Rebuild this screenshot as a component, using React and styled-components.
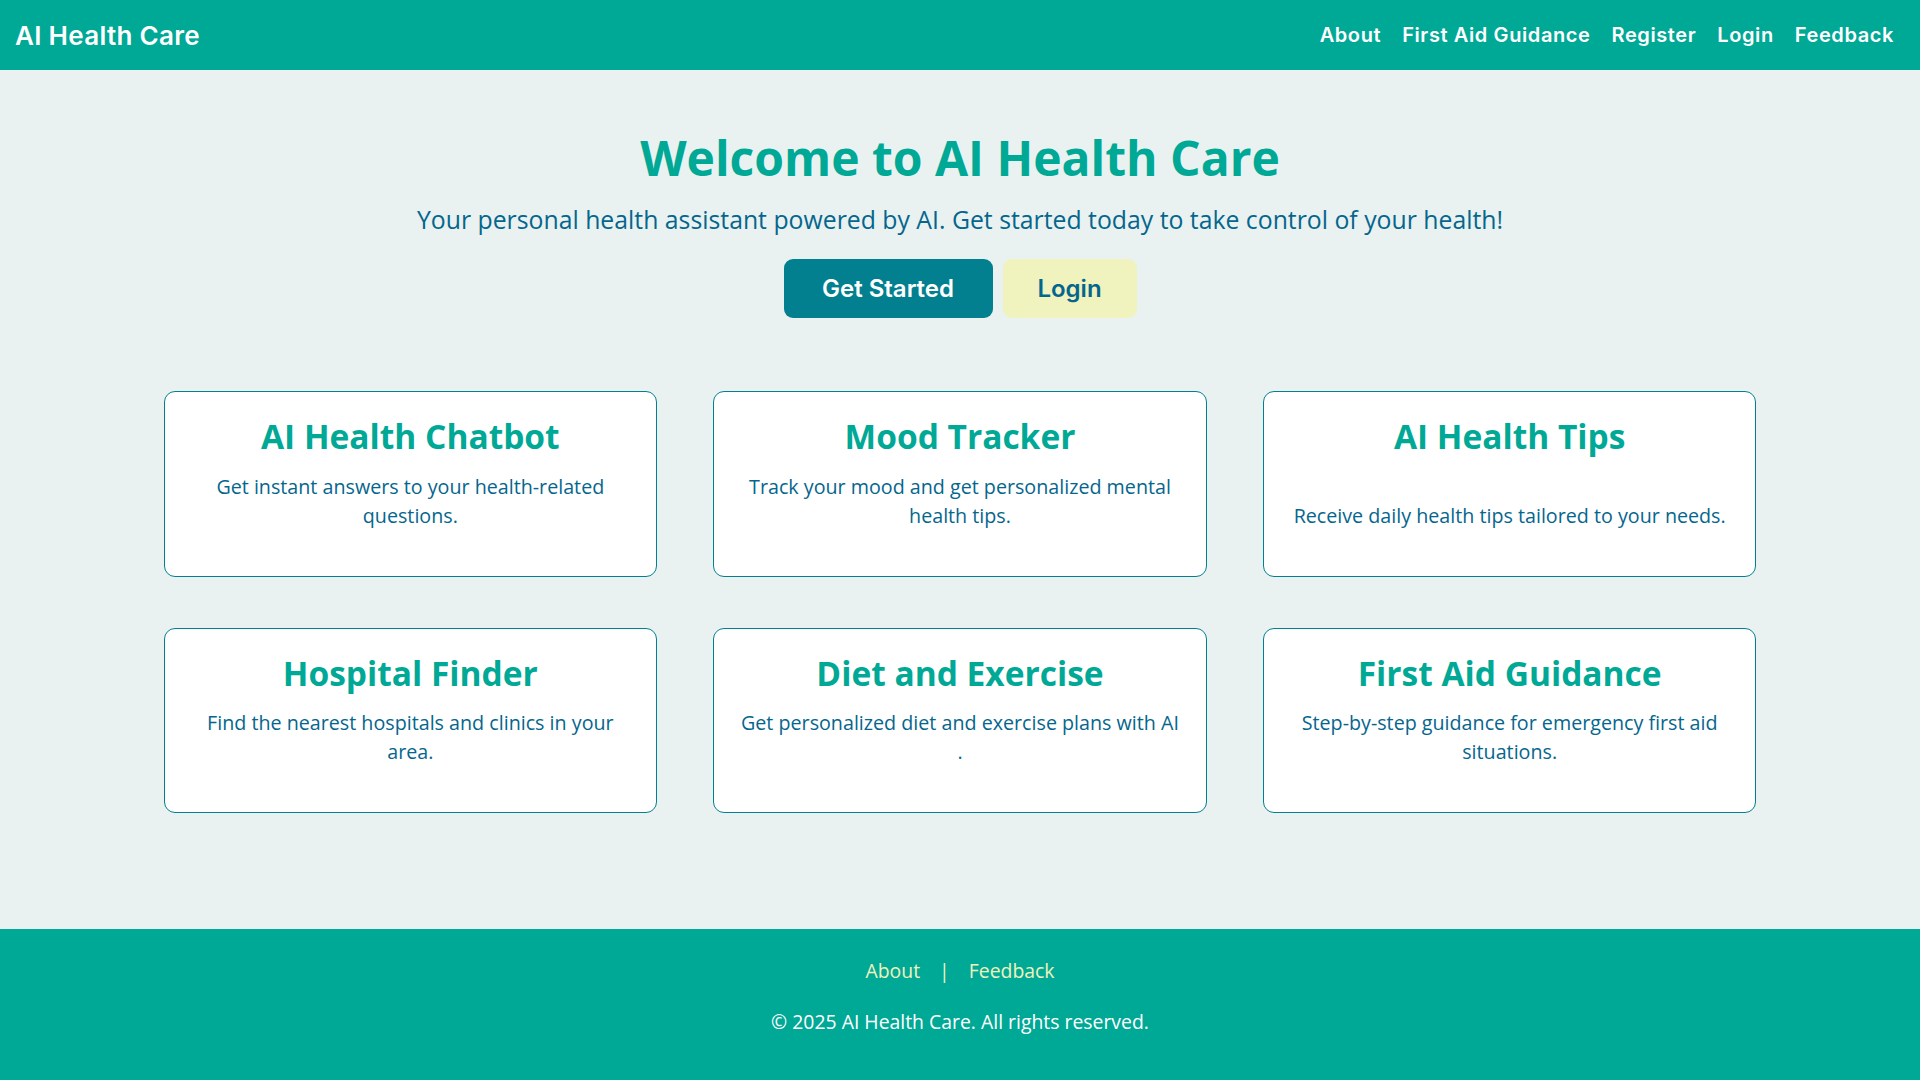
import React from 'react';
import styled, { createGlobalStyle } from 'styled-components';

const GlobalStyle = createGlobalStyle`
  * {
    box-sizing: border-box;
  }
  body {
    margin: 0;
    background-color: #e9f2f1;
    font-family: 'Open Sans', 'Lato', sans-serif;
  }
`;

const Page = styled.div`
  min-height: 100vh;
  display: flex;
  flex-direction: column;
`;

const Header = styled.header`
  height: 70px;
  padding: 0 26px 0 15px;
  display: flex;
  justify-content: space-between;
  align-items: center;
  background-color: #00a896;
`;

const Logo = styled.a`
  font-family: 'Inter', sans-serif;
  font-size: 26px;
  font-weight: 600;
  color: #ffffff;
  text-decoration: none;
  letter-spacing: 0.3px;
`;

const NavList = styled.ul`
  display: flex;
  align-items: center;
  gap: 21px;
  margin: 0;
  padding: 0;
  list-style: none;
`;

const NavListItem = styled.li`
  a {
    font-family: 'Inter', sans-serif;
    font-size: 20px;
    font-weight: 600;
    color: #ffffff;
    text-decoration: none;
    letter-spacing: 0.6px;
  }
`;

const Main = styled.main`
  flex: 1;
  padding: 59px 0 115px;
  display: flex;
  flex-direction: column;
  align-items: center;
`;

const Title = styled.h1`
  margin: 0;
  font-size: 48px;
  font-weight: 700;
  line-height: 1.2;
  color: #00a896;
`;

const Subtitle = styled.p`
  margin: 18px 0 0;
  font-size: 24.8px;
  line-height: 1.2;
  color: #05668d;
`;

const ButtonRow = styled.div`
  display: flex;
  gap: 10px;
  margin-top: 25px;
`;

const Button = styled.a`
  display: flex;
  align-items: center;
  justify-content: center;
  height: 59px;
  width: ${({ $width }) => $width}px;
  border-radius: 9px;
  font-family: 'Inter', sans-serif;
  font-size: 24px;
  font-weight: 600;
  text-decoration: none;
  color: ${({ $primary }) => ($primary ? '#ffffff' : '#05668d')};
  background-color: ${({ $primary }) => ($primary ? '#028090' : '#f0f3bd')};
`;

const Grid = styled.section`
  width: 1593px;
  margin-top: 73px;
  display: grid;
  grid-template-columns: repeat(3, 1fr);
  column-gap: 56px;
  row-gap: 51px;
`;

const Card = styled.div`
  padding: 24px 22px 46px;
  display: flex;
  flex-direction: column;
  justify-content: space-between;
  text-align: center;
  background-color: #ffffff;
  border: 1px solid #028090;
  border-radius: 11px;
`;

const CardTitle = styled.h3`
  margin: 0;
  font-size: 33.5px;
  font-weight: 700;
  line-height: 1.2;
  color: #00a896;
`;

const CardText = styled.p`
  margin: 15px 0 0;
  font-size: 19.7px;
  line-height: 29px;
  color: #05668d;
`;

const Footer = styled.footer`
  height: 151px;
  padding-top: 28px;
  display: flex;
  flex-direction: column;
  align-items: center;
  background-color: #00a896;
`;

const FooterLinks = styled.div`
  display: flex;
  align-items: center;
  gap: 19px;
  font-size: 19.4px;
  color: #f0f3bd;

  a {
    color: #f0f3bd;
    text-decoration: none;
  }
`;

const Copyright = styled.p`
  margin: 24px 0 0;
  font-size: 19.4px;
  color: #ffffff;
`;

const features = [
  { title: 'AI Health Chatbot', text: 'Get instant answers to your health-related questions.' },
  { title: 'Mood Tracker', text: 'Track your mood and get personalized mental health tips.' },
  { title: 'AI Health Tips', text: 'Receive daily health tips tailored to your needs.' },
  { title: 'Hospital Finder', text: 'Find the nearest hospitals and clinics in your area.' },
  { title: 'Diet and Exercise', text: 'Get personalized diet and exercise plans with AI .' },
  { title: 'First Aid Guidance', text: 'Step-by-step guidance for emergency first aid situations.' },
];

const App = () => {
  return (
    <Page>
      <GlobalStyle />
      <Header>
        <Logo href="#">AI Health Care</Logo>
        <NavList>
          <NavListItem><a href="#">About</a></NavListItem>
          <NavListItem><a href="#">First Aid Guidance</a></NavListItem>
          <NavListItem><a href="#">Register</a></NavListItem>
          <NavListItem><a href="#">Login</a></NavListItem>
          <NavListItem><a href="#">Feedback</a></NavListItem>
        </NavList>
      </Header>

      <Main>
        <Title>Welcome to AI Health Care</Title>
        <Subtitle>
          Your personal health assistant powered by AI. Get started today to take control of your health!
        </Subtitle>
        <ButtonRow>
          <Button href="#" $primary $width={209}>Get Started</Button>
          <Button href="#" $width={134}>Login</Button>
        </ButtonRow>

        <Grid>
          {features.map((f) => (
            <Card key={f.title}>
              <CardTitle>{f.title}</CardTitle>
              <CardText>{f.text}</CardText>
            </Card>
          ))}
        </Grid>
      </Main>

      <Footer>
        <FooterLinks>
          <a href="#">About</a>
          <span>|</span>
          <a href="#">Feedback</a>
        </FooterLinks>
        <Copyright>© 2025 AI Health Care. All rights reserved.</Copyright>
      </Footer>
    </Page>
  );
};

export default App;
